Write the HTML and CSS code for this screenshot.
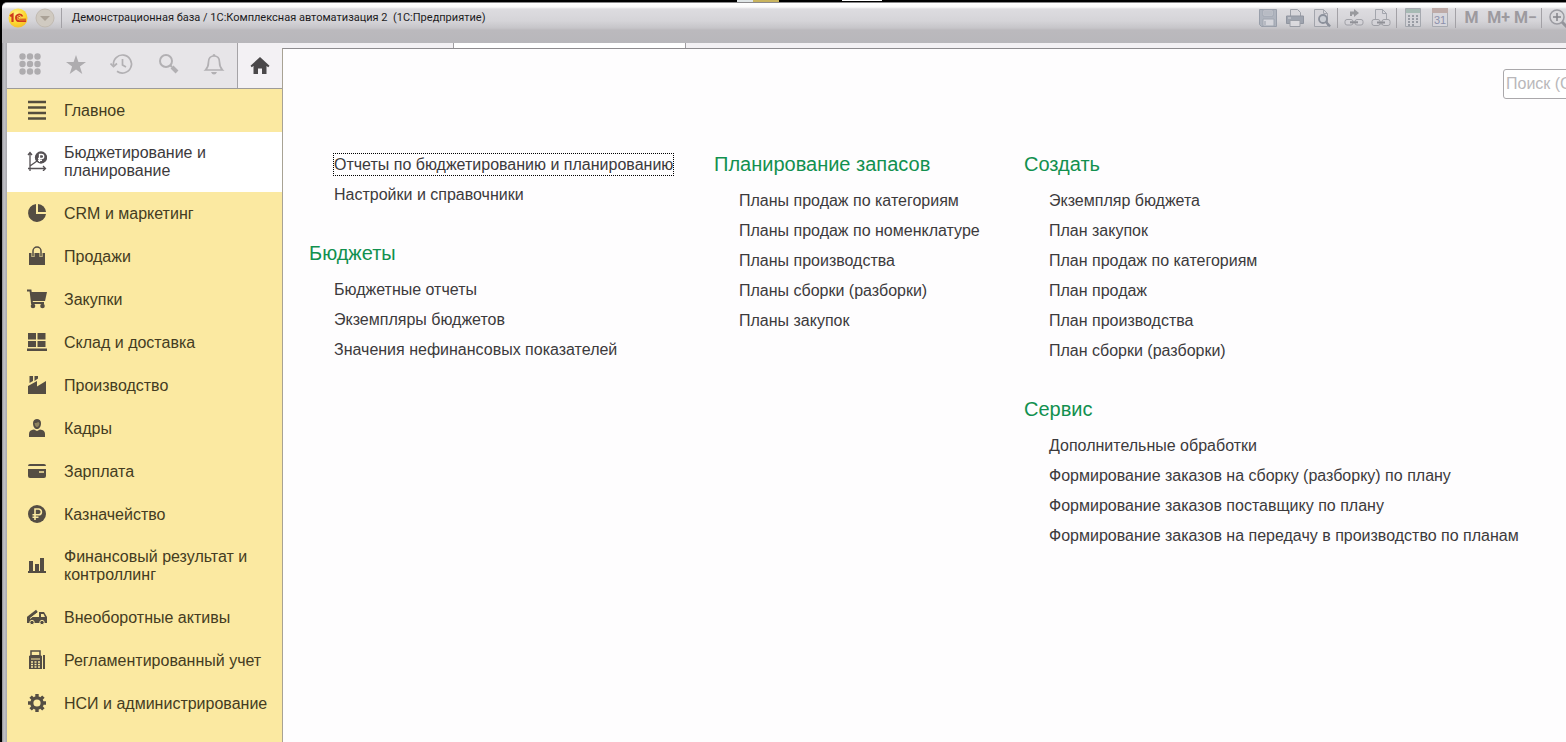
FILE: index.html
```html
<!DOCTYPE html>
<html lang="ru">
<head>
<meta charset="utf-8">
<title>Демонстрационная база / 1С:Комплексная автоматизация 2</title>
<link rel="stylesheet" href="styles.css">
</head>
<body>
<div class="desktop" aria-hidden="true">
  <span class="scrap scrap-white"></span><span class="scrap scrap-yellow"></span><span class="scrap scrap-line"></span>
</div>
<div class="window">
  <header class="titlebar">
    <button class="logo" type="button" aria-label="Главное меню">
      <svg width="20" height="20" viewBox="0 0 20 20"><defs><radialGradient id="g" cx=".4" cy=".3" r=".8"><stop offset="0" stop-color="#fff48a"/><stop offset=".6" stop-color="#fcd62c"/><stop offset="1" stop-color="#f3b52e"/></radialGradient></defs><circle cx="10" cy="10" r="9.5" fill="url(#g)"/><g fill="none" stroke="#cf3a1c"><path d="M2 8.200l2.500-1.700v7.500" stroke-width="2.200"/><path d="M14.500 8.500a3.400 3.400 0 1 0-3 4.700h6.500" stroke-width="1.800"/><path d="M12.500 9.300a1.400 1.400 0 1 0-1.200 1.900h6.700" stroke-width="1"/></g></svg>
    </button>
    <button class="drop" type="button" aria-label="Ещё">
      <svg width="20" height="20" viewBox="0 0 20 20"><circle cx="10" cy="10" r="9" fill="#d0cac1" stroke="#c1bab1"/><path d="M5 8h10l-5 5z" fill="#aaa196"/></svg>
    </button>
    <span class="sep"></span>
    <h1 class="title">Демонстрационная база / 1С:Комплексная автоматизация 2 &nbsp;(1С:Предприятие)</h1>
    <div class="tools">
      <button type="button" aria-label="Сохранить"><svg width="20" height="20" viewBox="0 0 20 20"><path d="M1.500 1.500h17v17h-15l-2-2z" fill="#a9afba" stroke="#8f96a3"/><path d="M5 2h10v6H5zM5 11h11v7H5z" fill="#d6d7dd" stroke="#979eaa"/><path d="M6 4h8M6 6h8M7 13v4" stroke="#8f96a3"/></svg></button>
      <button type="button" aria-label="Печать"><svg width="20" height="20" viewBox="0 0 20 20"><path d="M5.500 8V1.500h7l3 3V8" fill="#d8d7dc" stroke="#92969f"/><path d="M1.500 8h17v7.500h-17z" fill="#969ca8" stroke="#858b97"/><path d="M5 12.500h10v6H5z" fill="#dddce0" stroke="#92969f"/><path d="M3 10h3" stroke="#d8d7dc"/></svg></button>
      <button type="button" aria-label="Предварительный просмотр"><svg width="20" height="20" viewBox="0 0 20 20"><path d="M2.500 1.500h9l4 4v13h-13z" fill="#d5d4d9" stroke="#9a9da5"/><path d="M11.500 1.500v4h4" fill="none" stroke="#9a9da5"/><circle cx="11" cy="11" r="4" fill="#c8ccd3" stroke="#7f8591" stroke-width="1.800"/><path d="M14 14l4 4.500" stroke="#7f8591" stroke-width="2.500"/></svg></button>
      <span class="sep"></span>
      <button type="button" aria-label="Перейти по ссылке"><svg width="20" height="20" viewBox="0 0 20 20"><path d="M6 6V3.500h4V1l5 4-5 4V6.500H8V8H6z" fill="#8d8e93"/><rect x="1" y="11.500" width="8" height="5.500" rx="2" fill="#d5d4d9" stroke="#97989f"/><rect x="11" y="11.500" width="8" height="5.500" rx="2" fill="#d5d4d9" stroke="#97989f"/><path d="M6 14.300h8" stroke="#85868d" stroke-width="2"/></svg></button>
      <button type="button" aria-label="Получить ссылку"><svg width="20" height="20" viewBox="0 0 20 20"><path d="M4.500 16V1.500h7l4 4V16z" fill="#d8d7dc" stroke="#9a9da5"/><path d="M11.500 1.500v4h4" fill="none" stroke="#9a9da5"/><rect x="1" y="11.500" width="8" height="6" rx="2" fill="#d5d4d9" stroke="#97989f"/><rect x="11" y="11.500" width="8" height="6" rx="2" fill="#d5d4d9" stroke="#97989f"/><path d="M6 14.500h8" stroke="#85868d" stroke-width="2"/></svg></button>
      <span class="sep"></span>
      <button type="button" aria-label="Калькулятор"><svg width="20" height="20" viewBox="0 0 20 20"><path d="M2.500.5h15v18h-15z" fill="#d4d4d9" stroke="#9da1a8"/><path d="M3 1h14v4H3z" fill="#9db5ad"/><path d="M5 8h10M5 11h10M5 14h10M5 17h6" stroke="#8f939c" stroke-width="2" stroke-dasharray="2 2"/></svg></button>
      <button type="button" aria-label="Календарь"><svg width="20" height="20" viewBox="0 0 20 20"><path d="M2.500.5h15v18h-15z" fill="#d8d7dd" stroke="#a2a5ad"/><path d="M2 0h16v5H2z" fill="#baa39f"/><text x="10" y="16" text-anchor="middle" class="day">31</text></svg></button>
      <span class="sep"></span>
      <button type="button">M</button>
      <button type="button">M+</button>
      <button type="button">M−</button>
      <span class="sep"></span>
      <button type="button" aria-label="Увеличить"><svg width="20" height="20" viewBox="0 0 20 20"><circle cx="9" cy="9" r="7" fill="#dbdadd" stroke="#929299" stroke-width="1.500"/><path d="M5 9h8M9 5v8" stroke="#77777e" stroke-width="1.500"/><path d="M14 14l5 5" stroke="#8a8a91" stroke-width="3"/></svg></button>
    </div>
  </header>
  <div class="body">
    <aside class="side">
      <div class="quick">
        <button type="button" aria-label="Функции"><svg width="24" height="24" viewBox="0 0 24 24" fill="#aeacaf"><circle cx="4.500" cy="4.500" r="3.200"/><circle cx="12" cy="4.500" r="3.200"/><circle cx="19.500" cy="4.500" r="3.200"/><circle cx="4.500" cy="12" r="3.200"/><circle cx="12" cy="12" r="3.200"/><circle cx="19.500" cy="12" r="3.200"/><circle cx="4.500" cy="19.500" r="3.200"/><circle cx="12" cy="19.500" r="3.200"/><circle cx="19.500" cy="19.500" r="3.200"/></svg></button>
        <button type="button" aria-label="Избранное"><svg width="24" height="24" viewBox="0 0 24 24"><path d="M12 3l2.400 7H22l-6.100 4.500 2.400 7.500L12 17.400 5.700 22l2.400-7.500L2 10h7.600z" fill="#aeacaf"/></svg></button>
        <button type="button" aria-label="История"><svg width="24" height="24" viewBox="0 0 24 24" fill="none" stroke="#b2b0b3" stroke-width="1.700"><path d="M3.500 13a9 9 0 1 1 3.500 6.200"/><path d="M.5 11.500l3 3 3.500-3"/><path d="M12.500 7v6l3.500 2"/></svg></button>
        <button type="button" aria-label="Поиск"><svg width="24" height="24" viewBox="0 0 24 24" fill="none" stroke="#b2b0b3"><circle cx="10" cy="9" r="6" stroke-width="2"/><path d="M14 13l2 2" stroke-width="2"/><path d="M16 15l5 5" stroke-width="4"/></svg></button>
        <button type="button" aria-label="Оповещения"><svg width="24" height="24" viewBox="0 0 24 24"><path d="M3.500 18c2.500-2.500 3-4 3-8 0-4 2-6 5.500-6s5.500 2 5.500 6c0 4 .5 5.500 3 8z" fill="none" stroke="#b2b0b3" stroke-width="1.700"/><path d="M9 20h6q-1 2.500-3 2.500T9 20zM10.500 4a1.500 2 0 1 1 3 0z" fill="#b2b0b3"/></svg></button>
        <button type="button" class="home" aria-label="Начальная страница"><svg width="20" height="20" viewBox="0 0 20 20"><path d="M10 1l9.500 8.800-1.200 1.400L16.500 10V18H12v-5.500H8V18H3.500v-8l-1.800 1.200L.5 9.800z" fill="#4a484a"/></svg></button>
      </div>
      <nav class="sections">
        <a href="#"><svg viewBox="0 0 20 20"><path d="M1 2h18M1 7.500h18M1 13h18M1 18.500h18" stroke="#544d3d" stroke-width="2.400"/></svg><span>Главное</span></a>
        <a href="#" class="active"><svg viewBox="0 0 20 20" fill="none" stroke="#555154" stroke-width="1.300"><path d="M3 1v16.500h15M1 4l2-2.500L5 4M16 15l2.500 2.500L16 20M1 17.500h2V20M3 15l7-5"/><circle cx="14" cy="6.500" r="5.500" fill="#555154"/><path d="M12.500 11V3.500h2.200a2 2 0 0 1 0 4H11M11 9.300h4" stroke="#fff"/></svg><span>Бюджетирование и планирование</span></a>
        <a href="#"><svg viewBox="0 0 20 20" fill="#544d43"><path d="M9 1a9 9 0 1 0 10 10H9z"/><path d="M11 1v8h8a8.500 8.500 0 0 0-8-8z"/></svg><span>CRM и маркетинг</span></a>
        <a href="#"><svg viewBox="0 0 20 20"><path d="M2 7h16v12H2z" fill="#544d43"/><path d="M6 11V5a4 4 0 0 1 8 0v6" fill="none" stroke="#fbe9a1" stroke-width="3"/><path d="M6 10.500V5a4 4 0 0 1 8 0v5.500" fill="none" stroke="#544d43" stroke-width="1.500"/></svg><span>Продажи</span></a>
        <a href="#"><svg viewBox="0 0 20 20"><path d="M0 1.500h3.500L5 14h12" fill="none" stroke="#544d43" stroke-width="2"/><path d="M4 3h16l-2 9H5z" fill="#544d43"/><circle cx="6" cy="17" r="2.300" fill="#544d43"/><circle cx="15.500" cy="17" r="2.300" fill="#544d43"/></svg><span>Закупки</span></a>
        <a href="#"><svg viewBox="0 0 20 20" fill="#544d43"><path d="M1 1h8v6.500H1zM10.500 1h8v6.500h-8zM1 9h8v6H1zM10.500 9h8v6h-8zM0 16.500h20V19H0z"/></svg><span>Склад и доставка</span></a>
        <a href="#"><svg viewBox="0 0 20 20" fill="#544d43"><path d="M1 19v-8l9-5v5.500l9-5.500v13zM2.500 1h3.500v5l-3.500 2zM7.500 1H11v2.500L7.500 6z"/></svg><span>Производство</span></a>
        <a href="#"><svg viewBox="0 0 20 20" fill="#544d43"><path d="M6 5c0-5.500 8-5.500 8 0 0 4-2 6-4 6S6 9 6 5zM2 16c0-3 2-4 5-4.500l3 1.500 3-1.500c3 .5 5 1.500 5 4.500v3H2z"/><path d="M7.500 5c2 0 3-.5 4-1l1 1.500c-.5 2.500-1.500 3.500-2.500 3.500S8 8 7.500 5z" fill="#8f845f"/></svg><span>Кадры</span></a>
        <a href="#"><svg viewBox="0 0 20 20"><path d="M1 5q0-2 2-2h14q2 0 2 2zM1 8h18v7q0 2-2 2H3q-2 0-2-2z" fill="#544d43"/><path d="M12 11h5" stroke="#fbe9a1" stroke-width="1.500"/></svg><span>Зарплата</span></a>
        <a href="#"><svg viewBox="0 0 20 20"><circle cx="10" cy="10" r="9" fill="#544d43"/><path d="M8 16V5h3.500a2.900 2.900 0 0 1 0 5.800H5.500M5.500 13.300h6" fill="none" stroke="#fbe9a1" stroke-width="1.600"/></svg><span>Казначейство</span></a>
        <a href="#"><svg viewBox="0 0 20 20" fill="#544d43"><path d="M2 6h4v10H2zM8 9h4v7H8zM13 3h4v13h-4zM1 16h18v2H1z"/></svg><span>Финансовый результат и контроллинг</span></a>
        <a href="#"><svg viewBox="0 0 20 20"><path d="M0 10h12V5h5l3 5v6H0z" fill="#544d43"/><path d="M1 11l9-7" stroke="#544d43" stroke-width="3"/><path d="M3 11.500l8-6" stroke="#fbe9a1"/><path d="M14 7h2.500l1.500 3h-4z" fill="#fbe9a1"/><circle cx="5" cy="15.500" r="2.200" fill="#544d43" stroke="#fbe9a1"/><circle cx="15" cy="15.500" r="2.200" fill="#544d43" stroke="#fbe9a1"/></svg><span>Внеоборотные активы</span></a>
        <a href="#"><svg viewBox="0 0 20 20"><path d="M4 1h9v5H4z" fill="none" stroke="#544d43" stroke-width="1.500"/><path d="M2 6l2-1h9l2 1v13H2zM16 5h2v14h-2z" fill="#544d43"/><path d="M4 9h9" stroke="#fbe9a1"/><path d="M4 12h9M4 14.500h9M4 17h9" stroke="#fbe9a1" stroke-width="1.300" stroke-dasharray="2 1.500"/></svg><span>Регламентированный учет</span></a>
        <a href="#"><svg viewBox="0 0 20 20" fill="none" stroke="#544d43"><circle cx="10" cy="10" r="5.200" stroke-width="3.200"/><path d="M10 1v3M10 16v3M1 10h3M16 10h3M3.600 3.600l2.200 2.200M14.200 14.200l2.200 2.200M3.600 16.400l2.200-2.200M14.200 5.800l2.200-2.200" stroke-width="3.400"/></svg><span>НСИ и администрирование</span></a>
      </nav>
    </aside>
    <div class="work">
      <div class="tabs"><span class="tab"></span><span class="tab current"></span></div>
      <main class="panel">
        <div class="search"><input type="text" placeholder="Поиск (Ctrl+F)" aria-label="Поиск"></div>
        <div class="menu">
          <div class="col">
            <section>
              <ul><li><a href="#" class="focused">Отчеты по бюджетированию и планированию</a></li><li><a href="#">Настройки и справочники</a></li></ul>
            </section>
            <section>
              <h2>Бюджеты</h2>
              <ul><li><a href="#">Бюджетные отчеты</a></li><li><a href="#">Экземпляры бюджетов</a></li><li><a href="#">Значения нефинансовых показателей</a></li></ul>
            </section>
          </div>
          <div class="col">
            <section>
              <h2>Планирование запасов</h2>
              <ul><li><a href="#">Планы продаж по категориям</a></li><li><a href="#">Планы продаж по номенклатуре</a></li><li><a href="#">Планы производства</a></li><li><a href="#">Планы сборки (разборки)</a></li><li><a href="#">Планы закупок</a></li></ul>
            </section>
          </div>
          <div class="col">
            <section>
              <h2>Создать</h2>
              <ul><li><a href="#">Экземпляр бюджета</a></li><li><a href="#">План закупок</a></li><li><a href="#">План продаж по категориям</a></li><li><a href="#">План продаж</a></li><li><a href="#">План производства</a></li><li><a href="#">План сборки (разборки)</a></li></ul>
            </section>
            <section>
              <h2>Сервис</h2>
              <ul><li><a href="#">Дополнительные обработки</a></li><li><a href="#">Формирование заказов на сборку (разборку) по плану</a></li><li><a href="#">Формирование заказов поставщику по плану</a></li><li><a href="#">Формирование заказов на передачу в производство по планам</a></li></ul>
            </section>
          </div>
        </div>
      </main>
    </div>
  </div>
</div>
</body>
</html>
```
FILE: styles.css
```css
* { box-sizing: border-box; }
body {
  margin: 0;
  min-height: 100vh;
  display: flex;
  flex-direction: column;
  overflow: hidden;
  background: #000;
  color: #3c3a3c;
  font-family: "Liberation Sans", Arial, sans-serif;
  font-size: 16px;
}
button { margin: 0; padding: 0; border: 0; background: none; font: inherit; color: inherit; }
svg { display: block; }
a { color: inherit; text-decoration: none; }
ul { list-style: none; margin: 0; padding: 0; }

.desktop { height: 2px; flex: none; display: flex; padding-left: 737px; }
.scrap { height: 2px; }
.scrap-white { width: 16px; background: #dfe5e6; }
.scrap-yellow { width: 26px; background: #c9b45e; }
.scrap-line { width: 40px; height: 1px; margin-left: 63px; background: #fff; }

.window {
  flex: 1;
  display: flex;
  flex-direction: column;
  margin-left: 2px;
  padding-left: 5px;
  border-top: 1px solid #8a898b;
  border-top-left-radius: 5px;
  background: linear-gradient(90deg, #8f8e92, #c3c3c8 2px, #a9a9ae 5px);
}
.titlebar {
  height: 40px;
  flex: none;
  display: flex;
  align-items: flex-start;
  margin-left: -5px;
  padding: 5px 0 0 6px;
  border-top-left-radius: 5px;
  background: linear-gradient(#fff 0, #fafafa 4px, #dddce0 6px, #d5d4d8 18px, #c6c5c9 25px, #bbb9bd 27px, #b8b7bb 100%);
}
.logo, .drop { width: 20px; height: 20px; flex: none; }
.drop { margin-left: 7px; }
.titlebar .sep {
  width: 5px;
  height: 20px;
  flex: none;
  background: linear-gradient(#a3a1a6, #a3a1a6) center / 1px 100% no-repeat;
}
.drop + .sep { margin-left: 4px; }
.title {
  margin: 0 auto 0 8px;
  font: 11px/20px Roboto, sans-serif;
  color: #1c1b1d;
  white-space: nowrap;
}
.tools { display: flex; margin-right: -5px; color: #9d9a9f; font: bold 16px/20px Roboto, sans-serif; }
.tools button { width: 27px; height: 20px; display: grid; place-items: center; white-space: nowrap; }
.tools svg { opacity: 0.85; }
.day { font: 11px "Liberation Sans", sans-serif; fill: #8186a5; }

.body { flex: 1; display: flex; }
.side { width: 275px; flex: none; display: flex; flex-direction: column; background: #fbe9a1; }
.quick {
  height: 46px;
  display: flex;
  background: #e7e5e8;
  border-bottom: 1px solid #9d9b98;
}
.quick button { width: 46px; display: grid; place-items: center; padding-bottom: 3px; }
.quick .home { flex: 1; padding: 0; border-left: 1px solid #a5a3a6; background: #f3f1f4; }
.sections { display: flex; flex-direction: column; }
.sections a {
  min-height: 43px;
  display: flex;
  align-items: center;
  gap: 17px;
  padding: 12px 4px 12px 20px;
  line-height: 18px;
  color: #443c22;
}
.sections a svg { width: 20px; height: 20px; flex: none; margin: -2px 0 0; }
.sections .active { background: #fff; color: #3c3a3c; }

.work { flex: 1; min-width: 0; display: flex; flex-direction: column; }
.tabs { height: 5px; display: flex; background: #f3f1f4; }
.tab { width: 171px; }
.tab.current { width: 233px; background: #fff; border: 1px solid #a09ea1; border-width: 0 1px; }
.panel {
  flex: 1;
  padding-top: 20px;
  border-top: 1px solid #8e8c8f;
  border-left: 1px solid #a8a294;
  background: #fefdfe;
  overflow: hidden;
}
.search { display: flex; justify-content: flex-end; }
.search input {
  width: 240px;
  height: 30px;
  margin-right: -177px;
  padding: 0 2px;
  border: 1px solid #aaa8ab;
  border-radius: 3px;
  background: #fff;
  font: inherit;
}
.search input::placeholder { color: #b9b7ba; opacity: 1; }
.menu {
  display: grid;
  grid-template-columns: 405px 310px 1fr;
  padding: 50px 26px 0;
  white-space: nowrap;
}
.col { display: flex; flex-direction: column; gap: 29px; }
h2 { margin: 0 0 6px; font-size: 20px; font-weight: normal; line-height: 30px; color: #12904f; }
.menu ul { padding-left: 25px; }
.menu li { height: 30px; display: flex; align-items: center; }
.menu li a { line-height: 20px; padding-top: 1px; }
.focused { outline: 1px dotted #000; outline-offset: 0; box-shadow: none; }
```
